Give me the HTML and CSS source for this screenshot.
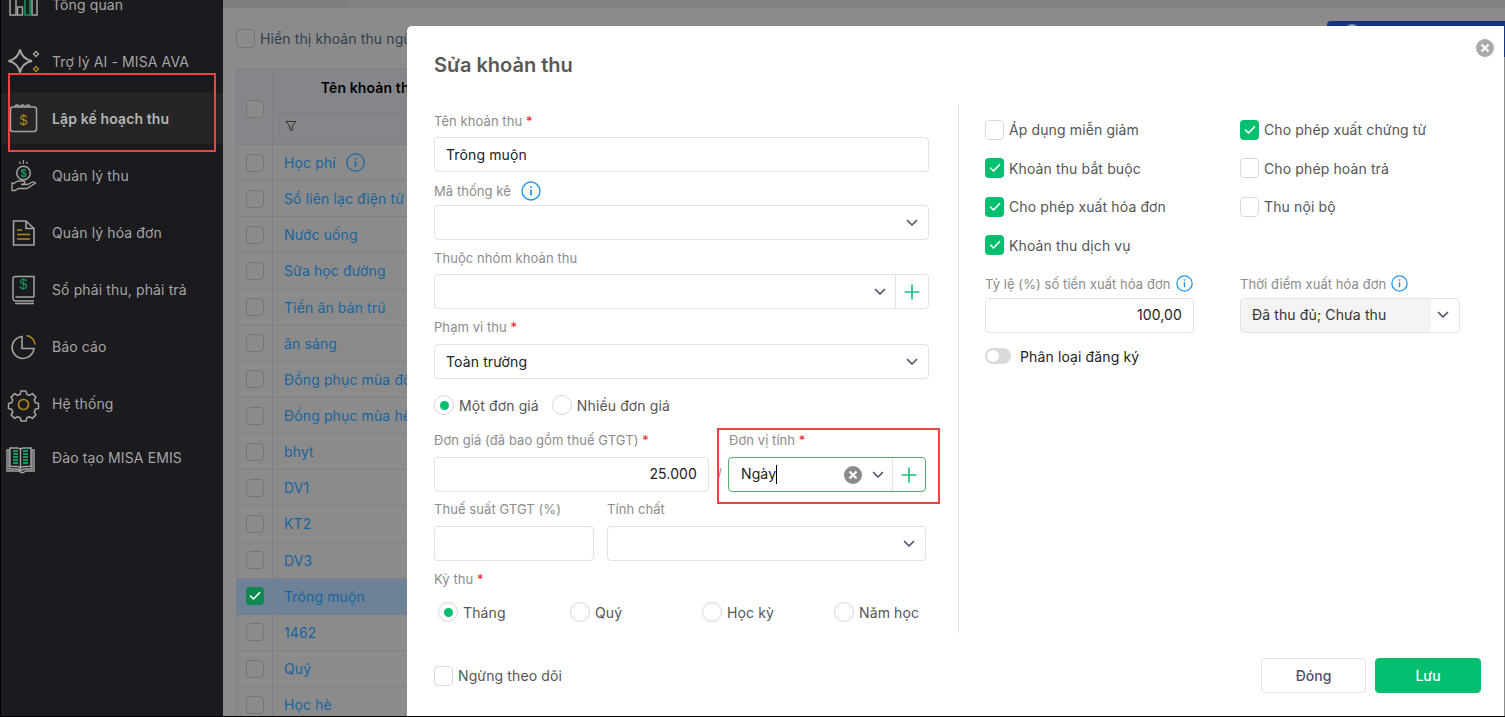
FILE: index.html
```html
<!DOCTYPE html>
<html lang="vi">
<head>
    <meta charset="UTF-8">
    <meta name="viewport" content="width=device-width, initial-scale=1.0">
    <title>Sửa khoản thu</title>
    <link rel="stylesheet" href="styles.css">
</head>
<body>
    <svg class="defs" width="0" height="0">
        <symbol id="chev" viewBox="0 0 12 8"><path d="M1.5 1.5 6 6l4.500-4.500" fill="none" stroke="#55536e" stroke-width="1.700" stroke-linecap="round" stroke-linejoin="round"/></symbol>
        <symbol id="plus" viewBox="0 0 16 16"><path d="M8 .5v15M.5 8h15" fill="none" stroke="#1fc07f" stroke-width="1.700"/></symbol>
        <symbol id="tick" viewBox="0 0 12 10"><path d="M1.500 5 4.500 8l6-6.300" fill="none" stroke="#fff" stroke-width="1.600" stroke-linecap="round" stroke-linejoin="round"/></symbol>
        <symbol id="clear" viewBox="0 0 18 18"><circle cx="9" cy="9" r="9"/><path d="m5.500 5.500 7 7m0-7-7 7" fill="none" stroke="#fff" stroke-width="2.200"/></symbol>
    </svg>

    <div class="app">
        <nav class="sidebar">
            <a class="nav-item">
                <svg class="nav-icon" viewBox="0 0 40 40" fill="none" stroke="#a3a3a3" stroke-width="1.500">
                    <rect x="6" y="8" width="6" height="22"/><rect x="13.500" y="22" width="5" height="8"/>
                    <rect x="21" y="8" width="5" height="22" stroke="#0f9a5c"/><rect x="28" y="8" width="5" height="22"/>
                </svg>
                <span>Tổng quan</span>
            </a>
            <a class="nav-item">
                <svg class="nav-icon" viewBox="0 0 40 40" fill="none" stroke="#a3a3a3" stroke-width="2">
                    <path d="M16 7.500Q18 17 28 19 18 21 16 30.500 14 21 4.500 19 14 17 16 7.500Z"/>
                    <path d="M32 9.500l2.500 2.500-2.500 2.500-2.500-2.500z" stroke-width="1.300"/>
                    <path d="M32 24.500l2.500 2.500-2.500 2.500-2.500-2.500z" stroke="#b08a18" stroke-width="1.300"/>
                </svg>
                <span>Trợ lý AI - MISA AVA</span>
            </a>
            <a class="nav-item active">
                <svg class="nav-icon" viewBox="0 0 40 40" fill="none" stroke="#a3a3a3" stroke-width="1.500">
                    <rect x="6.500" y="8" width="26" height="24.500" rx="2.500"/>
                    <path d="M11 8a2 2 0 0 1 4 0m1.500 0a2 2 0 0 1 4 0m1.500 0a2 2 0 0 1 4 0" stroke-width="1.300"/>
                    <text x="19.500" y="25.500" class="icon-money gold">$</text>
                </svg>
                <span>Lập kế hoạch thu</span>
            </a>
            <a class="nav-item">
                <svg class="nav-icon" viewBox="0 0 40 40" fill="none" stroke="#a3a3a3" stroke-width="1.500">
                    <path d="M19.500 4v4M16 5.500v2.500M23 5.500v2.500" stroke-width="1.200"/>
                    <circle cx="19.500" cy="17" r="6.800"/>
                    <text x="19.500" y="21" class="icon-money green small">$</text>
                    <path d="M8 27v7.500h3l3.500-2h8.500l8.500-5.500c-1-1.500-2.500-1.500-4-.5l-4 2h-6.500l3-.5c1.500-.5 1-3-.5-3h-5c-2 0-3 1.500-4.500 2.500z" stroke-width="1.300"/>
                </svg>
                <span>Quản lý thu</span>
            </a>
            <a class="nav-item">
                <svg class="nav-icon" viewBox="0 0 40 40" fill="none" stroke="#a3a3a3" stroke-width="1.600">
                    <path d="M9.500 8H22l8 7.500V32H9.500zM22 8v7.500h8"/>
                    <path d="M13 17h5M13 21.500h13M13 26h13" stroke="#b08a18" stroke-width="1.700"/>
                </svg>
                <span>Quản lý hóa đơn</span>
            </a>
            <a class="nav-item">
                <svg class="nav-icon" viewBox="0 0 40 40" fill="none" stroke="#a3a3a3" stroke-width="1.500">
                    <path d="M30 27V6.500H11.500A2.500 2.500 0 0 0 9 9v19.500a2.500 2.500 0 0 0 2.500 2.500H30M11.500 27H30M11 33.500h19"/>
                    <text x="19.500" y="19" class="icon-money green">$</text>
                </svg>
                <span>Sổ phải thu, phải trả</span>
            </a>
            <a class="nav-item">
                <svg class="nav-icon" viewBox="0 0 40 40" fill="none" stroke="#a3a3a3" stroke-width="1.600">
                    <path d="M18 9.500a11 11 0 1 0 12 12H18z"/>
                    <path d="M22.500 8.500a10 10 0 0 1 8.500 9" stroke="#b08a18"/>
                </svg>
                <span>Báo cáo</span>
            </a>
            <a class="nav-item">
                <svg class="nav-icon" viewBox="0 0 40 40" fill="none" stroke="#a3a3a3" stroke-width="1.500">
                    <path d="M17 8h5l.8 3.200 2.700 1.100 2.900-1.700 3.500 3.500-1.700 2.900 1.100 2.700 3.200.8v5l-3.200.8-1.100 2.700 1.700 2.900-3.500 3.500-2.900-1.700-2.700 1.100-.8 3.200h-5l-.8-3.200-2.700-1.100-2.900 1.700-3.500-3.500 1.700-2.900-1.100-2.700-3.200-.8v-5l3.200-.8 1.100-2.700-1.700-2.900 3.500-3.500 2.900 1.700 2.700-1.100z" stroke-linejoin="round" transform="translate(0 -1)"/>
                    <circle cx="19.500" cy="20.500" r="5" stroke="#b08a18" stroke-width="1.700"/>
                </svg>
                <span>Hệ thống</span>
            </a>
            <a class="nav-item last">
                <svg class="nav-icon" viewBox="0 0 40 40" fill="none" stroke="#a3a3a3" stroke-width="1.400">
                    <path d="M3 12v21h12l2 1.500h2.500L21.500 33H30V12h-2v19h-8l-3 1.500L14 31H5V12z"/>
                    <path d="M6 10h7c2 0 3.500 1 3.500 2v18c-1-1-2-1.500-3.500-1.500H6zM27 10h-7c-2 0-3.500 1-3.500 2v18c1-1 2-1.500 3.500-1.500h7z"/>
                    <path d="M9 13h5M9 16h5M9 19h5M9 22h5M9 25h5M19 13h5M19 16h5M19 19h5M19 22h5M19 25h5" stroke="#0f9a5c" stroke-width="1.800"/>
                </svg>
                <span>Đào tạo MISA EMIS</span>
            </a>
        </nav>

        <main class="main">
            <div class="topbar"><div class="topbar-tab"></div></div>
            <div class="toolbar">
                <label class="check-row dim"><span class="box dim-box big"></span>Hiển thị khoản thu ngừng theo dõi</label>
                <div class="blue-btn"><span class="blue-dot"></span></div>
            </div>
            <div class="table">
                <div class="table-head">
                    <div class="cell-check head-check"><span class="box dim-box"></span></div>
                    <div class="head-name">
                        <b>Tên khoản thu</b>
                        <div class="filter">
                            <svg width="12" height="12" viewBox="0 0 12 12" fill="none" stroke="#333" stroke-width="1"><path d="M1 1.500h10L7.300 6v4.500L4.700 9V6z"/></svg>
                        </div>
                    </div>
                </div>
                <div class="row"><div class="cell-check"><span class="box dim-box"></span></div><div class="cell-name">Học phí <svg class="row-info" width="19" height="19" viewBox="0 0 19 19" fill="none" stroke="#1769a8" stroke-width="1.300"><circle cx="9.500" cy="9.500" r="8.700"/><path d="M9.500 8v6M9.500 5v1.500" stroke-width="1.600"/></svg></div></div>
                <div class="row"><div class="cell-check"><span class="box dim-box"></span></div><div class="cell-name">Sổ liên lạc điện tử</div></div>
                <div class="row"><div class="cell-check"><span class="box dim-box"></span></div><div class="cell-name">Nước uống</div></div>
                <div class="row"><div class="cell-check"><span class="box dim-box"></span></div><div class="cell-name">Sữa học đường</div></div>
                <div class="row"><div class="cell-check"><span class="box dim-box"></span></div><div class="cell-name">Tiền ăn bán trú</div></div>
                <div class="row"><div class="cell-check"><span class="box dim-box"></span></div><div class="cell-name">ăn sáng</div></div>
                <div class="row"><div class="cell-check"><span class="box dim-box"></span></div><div class="cell-name">Đồng phục mùa đông</div></div>
                <div class="row"><div class="cell-check"><span class="box dim-box"></span></div><div class="cell-name">Đồng phục mùa hè</div></div>
                <div class="row"><div class="cell-check"><span class="box dim-box"></span></div><div class="cell-name">bhyt</div></div>
                <div class="row"><div class="cell-check"><span class="box dim-box"></span></div><div class="cell-name">DV1</div></div>
                <div class="row"><div class="cell-check"><span class="box dim-box"></span></div><div class="cell-name">KT2</div></div>
                <div class="row"><div class="cell-check"><span class="box dim-box"></span></div><div class="cell-name">DV3</div></div>
                <div class="row selected"><div class="cell-check"><span class="box dim-checked"><svg width="12" height="10"><use href="#tick"/></svg></span></div><div class="cell-name">Trông muộn</div></div>
                <div class="row"><div class="cell-check"><span class="box dim-box"></span></div><div class="cell-name">1462</div></div>
                <div class="row"><div class="cell-check"><span class="box dim-box"></span></div><div class="cell-name">Quỹ</div></div>
                <div class="row"><div class="cell-check"><span class="box dim-box"></span></div><div class="cell-name">Học hè</div></div>
            </div>
        </main>

        <section class="modal">
            <svg class="modal-close" width="18" height="18"><use href="#clear"/></svg>
            <h2 class="modal-title">Sửa khoản thu</h2>

            <div class="modal-body">
                <div class="col-left">
                    <div class="field">
                        <label class="label">Tên khoản thu <i>*</i></label>
                        <div class="input"><span class="value">Trông muộn</span></div>
                    </div>
                    <div class="field">
                        <label class="label label-icon">Mã thống kê
                            <svg class="info" width="20" height="20" viewBox="0 0 20 20" fill="none" stroke="#1e95ee" stroke-width="1.400"><circle cx="10" cy="10" r="9"/><path d="M10 8.500v6M10 5v1.800" stroke-width="1.700"/></svg>
                        </label>
                        <div class="input"><svg class="chev"><use href="#chev"/></svg></div>
                    </div>
                    <div class="field">
                        <label class="label">Thuộc nhóm khoản thu</label>
                        <div class="input">
                            <svg class="chev chev-addon"><use href="#chev"/></svg>
                            <span class="addon"><svg width="16" height="16"><use href="#plus"/></svg></span>
                        </div>
                    </div>
                    <div class="field scope">
                        <label class="label">Phạm vi thu <i>*</i></label>
                        <div class="input"><span class="value">Toàn trường</span><svg class="chev"><use href="#chev"/></svg></div>
                    </div>

                    <div class="radios">
                        <label class="radio on"><span class="dot"></span>Một đơn giá</label>
                        <label class="radio"><span class="dot"></span>Nhiều đơn giá</label>
                    </div>

                    <div class="field-row price-row">
                        <div class="field price">
                            <label class="label">Đơn giá (đã bao gồm thuế GTGT) <i>*</i></label>
                            <div class="input right"><span class="value">25.000</span></div>
                        </div>
                        <span class="slash">/</span>
                        <div class="field unit">
                            <label class="label">Đơn vị tính <i>*</i></label>
                            <div class="input focused">
                                <span class="value">Ngày</span><span class="caret"></span>
                                <svg class="clear" width="18" height="18"><use href="#clear"/></svg>
                                <svg class="chev chev-unit"><use href="#chev"/></svg>
                                <span class="addon"><svg width="16" height="16"><use href="#plus"/></svg></span>
                            </div>
                        </div>
                    </div>

                    <div class="field-row tax-row">
                        <div class="field tax">
                            <label class="label">Thuế suất GTGT (%)</label>
                            <div class="input"></div>
                        </div>
                        <div class="field nature">
                            <label class="label">Tính chất</label>
                            <div class="input"><svg class="chev"><use href="#chev"/></svg></div>
                        </div>
                    </div>

                    <label class="label period-label">Kỳ thu <i>*</i></label>
                    <div class="periods">
                        <label class="radio on"><span class="dot"></span>Tháng</label>
                        <label class="radio"><span class="dot"></span>Quý</label>
                        <label class="radio"><span class="dot"></span>Học kỳ</label>
                        <label class="radio"><span class="dot"></span>Năm học</label>
                    </div>
                </div>

                <div class="col-right">
                    <div class="checks">
                        <label class="check-row"><span class="box"></span>Áp dụng miễn giảm</label>
                        <label class="check-row"><span class="box checked"><svg width="12" height="10"><use href="#tick"/></svg></span>Cho phép xuất chứng từ</label>
                        <label class="check-row"><span class="box checked"><svg width="12" height="10"><use href="#tick"/></svg></span>Khoản thu bắt buộc</label>
                        <label class="check-row"><span class="box"></span>Cho phép hoàn trả</label>
                        <label class="check-row"><span class="box checked"><svg width="12" height="10"><use href="#tick"/></svg></span>Cho phép xuất hóa đơn</label>
                        <label class="check-row"><span class="box"></span>Thu nội bộ</label>
                        <label class="check-row"><span class="box checked"><svg width="12" height="10"><use href="#tick"/></svg></span>Khoản thu dịch vụ</label>
                    </div>
                    <div class="invoice-row">
                        <div class="field rate">
                            <label class="label label-icon small-gap">Tỷ lệ (%) số tiền xuất hóa đơn
                                <svg class="info" width="17" height="17" viewBox="0 0 20 20" fill="none" stroke="#1e95ee" stroke-width="1.500"><circle cx="10" cy="10" r="9"/><path d="M10 8.500v6M10 5v1.800" stroke-width="1.700"/></svg>
                            </label>
                            <div class="input right"><span class="value">100,00</span></div>
                        </div>
                        <div class="field when">
                            <label class="label label-icon small-gap">Thời điểm xuất hóa đơn
                                <svg class="info" width="17" height="17" viewBox="0 0 20 20" fill="none" stroke="#1e95ee" stroke-width="1.500"><circle cx="10" cy="10" r="9"/><path d="M10 8.500v6M10 5v1.800" stroke-width="1.700"/></svg>
                            </label>
                            <div class="input when-input">
                                <span class="when-value">Đã thu đủ; Chưa thu</span>
                                <svg class="chev"><use href="#chev"/></svg>
                            </div>
                        </div>
                    </div>
                    <label class="toggle-row"><span class="toggle"></span>Phân loại đăng ký</label>
                </div>
            </div>

            <div class="modal-footer">
                <label class="check-row"><span class="box"></span>Ngừng theo dõi</label>
                <div class="footer-btns">
                    <button class="btn">Đóng</button>
                    <button class="btn btn-save">Lưu</button>
                </div>
            </div>
        </section>

        <div class="mark mark-nav"></div>
        <div class="mark mark-unit"></div>
    </div>
</body>
</html>
```

FILE: styles.css
```css
* {
    box-sizing: border-box;
}

html, body {
    height: 100%;
}

body {
    margin: 0;
    background-color: #000;
    font-family: Inter, "Noto Sans", sans-serif;
    font-size: 14px;
    letter-spacing: .12px;
    color: #555;
    overflow: hidden;
}

.defs {
    position: absolute;
}

.app {
    position: relative;
    display: flex;
    height: 716px;
    margin-left: 1px;
    overflow: hidden;
}

/* sidebar */
.sidebar {
    flex: 0 0 222px;
    margin-top: -24px;
    background-color: #1b1a1e;
    color: #a5a5a5;
}

.nav-item {
    display: flex;
    align-items: center;
    gap: 8px;
    height: 57px;
    padding-left: 3px;
}

.nav-item.active {
    height: 51px;
    margin: 3px 0;
    background-color: #252525;
    color: #b4b4b4;
    font-weight: 600;
}

.nav-item.last {
    margin-top: -3px;
}

.nav-icon {
    flex: none;
    width: 40px;
    height: 40px;
}

.icon-money {
    font-family: "Liberation Sans", sans-serif;
    font-size: 14px;
    font-weight: 400;
    text-anchor: middle;
    stroke: none;
}

.icon-money.small {
    font-size: 11px;
    font-weight: 700;
}

.gold {
    fill: #b08a18;
}

.green {
    fill: #0f9a5c;
}

/* page behind the dialog */
.main {
    flex: 1;
    min-width: 0;
    background-color: #8b8b8b;
    color: #2b3d4d;
}

.topbar {
    height: 8px;
    background-color: #838383;
}

.topbar-tab {
    width: 126px;
    height: 8px;
    background-color: #7e7e7e;
}

.toolbar {
    display: flex;
    align-items: center;
    height: 61px;
    padding-left: 13px;
}

.blue-btn {
    display: flex;
    width: 178px;
    height: 36px;
    margin-left: auto;
    border-radius: 4px 0 0 4px;
    background-color: #17357e;
}

.blue-dot {
    width: 18px;
    height: 18px;
    margin: 3px 0 0 16px;
    border-radius: 50%;
    background-color: #8b95ad;
}

.table {
    width: 800px;
    margin-left: 13px;
    border-left: 1px solid #7c7f8a;
}

.table-head {
    display: flex;
    height: 76px;
    border-top: 1px solid #7c7f8a;
    border-bottom: 1px solid #7c7f8a;
    background-color: #85868a;
}

.cell-check {
    display: flex;
    flex: 0 0 36px;
    align-items: center;
    justify-content: center;
    border-right: 1px solid #7c7f8a;
}

.head-check {
    padding-top: 4px;
}

.head-name {
    flex: 0 0 192px;
    padding: 9px 4px 0 6px;
    text-align: center;
    color: #000;
    border-right: 1px solid #7c7f8a;
}

.head-name b {
    display: block;
    font-weight: 600;
    line-height: 18px;
}

.filter {
    display: flex;
    align-items: center;
    height: 27px;
    margin-top: 15px;
    padding-left: 5px;
    border: 1px solid #7c7f8a;
    border-radius: 4px;
}

.row {
    display: flex;
    height: 36.15px;
    border-bottom: 1px solid #7c7f8a;
}

.row.selected {
    background-color: #6d8297;
}

.cell-name {
    display: flex;
    flex: 1;
    align-items: center;
    padding-left: 11px;
    color: #17659f;
}

.row-info {
    margin-left: 10px;
}

.box {
    display: inline-flex;
    flex: none;
    align-items: center;
    justify-content: center;
    width: 19px;
    height: 20px;
    border: 1px solid #d9d9d9;
    border-radius: 4px;
    background-color: #fff;
}

.box.checked {
    border: 0;
    background-color: #04bf70;
}

.dim-box {
    width: 18px;
    height: 18px;
    border-color: #757575;
    background-color: #8b8b8b;
}

.dim-box.big {
    width: 19px;
    height: 19px;
}

.dim-checked {
    width: 18px;
    height: 18px;
    border: 0;
    background-color: #0b8a52;
}

.check-row {
    display: flex;
    align-items: center;
    gap: 5px;
}

.check-row.dim {
    color: #2f3f4f;
}

/* dialog */
.modal {
    position: absolute;
    top: 26px;
    left: 406px;
    display: flex;
    flex-direction: column;
    width: 1097px;
    height: 690px;
    padding: 27px 23px 0 27px;
    border-radius: 5px 0 0 0;
    background-color: #fff;
}

.modal-close {
    position: absolute;
    top: 13px;
    right: 10px;
    fill: #a9a9a9;
}

.modal-title {
    margin: 0 0 26px;
    font-size: 20px;
    font-weight: 600;
    line-height: 25px;
    letter-spacing: 0;
    color: #595959;
}

.modal-body {
    display: flex;
    height: 529px;
}

.col-left {
    flex: 0 0 525px;
    padding: 9px 29px 0 0;
    border-right: 1px solid #e3e3e3;
}

.col-right {
    flex: 1;
    padding: 15.600px 0 0 26px;
}

.field {
    margin-bottom: 10px;
}

.field.scope .label {
    margin-bottom: 9px;
}

.label {
    display: block;
    margin-bottom: 8px;
    font-size: 13px;
    line-height: 16px;
    letter-spacing: .07px;
    color: #8c8c8c;
}

.label i {
    font-style: normal;
    color: #f02020;
}

.label-icon {
    display: flex;
    align-items: center;
    gap: 10px;
    height: 20px;
    margin: -1px 0 4px;
}

.label-icon.small-gap {
    gap: 5px;
    margin-top: 0;
}

.input {
    display: flex;
    align-items: center;
    height: 35px;
    padding: 0 11px;
    border: 1px solid #e2e2e2;
    border-radius: 4px;
    background-color: #fff;
}

.input.right {
    justify-content: flex-end;
}

.input.right .value, .focused .value {
    margin-bottom: 2px;
}

.input.focused {
    padding: 0 0 0 12px;
    border-color: #55ad6a;
}

.value {
    color: #212121;
}

.chev {
    flex: none;
    width: 12px;
    height: 8px;
    margin-left: auto;
    margin-right: -1px;
}

.addon {
    display: flex;
    flex: none;
    align-items: center;
    justify-content: center;
    width: 33px;
    height: 100%;
    margin: 0 -11px 0 9px;
    border-left: 1px solid #e2e2e2;
}

.chev-addon {
    margin-right: 0;
}

.radios {
    display: flex;
    gap: 13px;
    margin: 15px 0 16px;
}

.radio {
    display: flex;
    align-items: center;
    gap: 5px;
    height: 22px;
}

.dot {
    position: relative;
    flex: none;
    width: 20px;
    height: 20px;
    border: 1px solid #d5d5d5;
    border-radius: 50%;
}

.radio.on .dot::after {
    content: "";
    position: absolute;
    top: 4.500px;
    left: 4.500px;
    width: 9px;
    height: 9px;
    border-radius: 50%;
    background-color: #04bf70;
}

.field-row {
    display: flex;
    width: 492px;
}

.field-row .field {
    margin-bottom: 9px;
}

.field-row .label {
    margin-bottom: 9px;
}

.price {
    flex: 0 0 275px;
}

.slash {
    flex: 0 0 19px;
    padding: 33px 0 0 8px;
    color: #999;
}

.unit {
    flex: 1;
}

.unit .label {
    padding-left: 1px;
}

.caret {
    width: 1px;
    height: 19px;
    background-color: #000;
}

.clear {
    flex: none;
    margin-left: auto;
    fill: #8a8a8a;
}

.chev-unit {
    margin: 0 0 0 10px;
}

.unit .addon {
    margin: 0 0 0 8px;
}

.tax {
    flex: 0 0 160px;
}

.nature {
    flex: 0 0 319px;
    margin-left: 13px;
}

.period-label {
    margin: 1px 0 0;
}

.periods {
    display: grid;
    grid-template-columns: repeat(3, 132px) auto;
    margin-top: 14px;
    padding-left: 4px;
}

.periods .radio {
    gap: 5px;
}

.checks {
    display: grid;
    grid-template-columns: 255px auto;
    grid-auto-rows: 20px;
    row-gap: 18.500px;
}

.invoice-row {
    display: flex;
    margin-top: 18.900px;
}

.rate {
    flex: 0 0 209px;
}

.when {
    flex: 0 0 220px;
    margin-left: 46px;
}

.when-input {
    padding: 0 11px 0 0;
}

.when-value {
    display: flex;
    align-items: center;
    width: 190px;
    height: 100%;
    padding: 0 0 2px 11px;
    border-radius: 4px 0 0 4px;
    background-color: #f4f4f4;
    color: #333;
}

.toggle-row {
    display: flex;
    align-items: center;
    gap: 9px;
    margin-top: 5px;
    color: #222;
}

.toggle {
    position: relative;
    width: 26px;
    height: 16px;
    border-radius: 8px;
    background-color: #d9d9d9;
}

.toggle::after {
    content: "";
    position: absolute;
    top: 2px;
    left: 2px;
    width: 12px;
    height: 12px;
    border-radius: 50%;
    background-color: #fff;
}

.modal-footer {
    display: flex;
    align-items: center;
    justify-content: space-between;
    margin-top: 25px;
}

.footer-btns {
    display: flex;
    gap: 9px;
}

.btn {
    width: 105px;
    height: 35px;
    border: 1px solid #e2e2e2;
    border-radius: 4px;
    background-color: #fff;
    font: 500 14px Inter, sans-serif;
    color: #4f4d69;
}

.btn-save {
    width: 106px;
    border-color: #04bf70;
    background-color: #04bf70;
    color: #fff;
}

/* red marks drawn on the screenshot */
.mark {
    position: absolute;
    border: 2px solid #f24141;
}

.mark-nav {
    top: 73px;
    left: 7px;
    width: 208px;
    height: 79px;
}

.mark-unit {
    top: 428px;
    left: 716px;
    width: 223px;
    height: 76px;
}
```
